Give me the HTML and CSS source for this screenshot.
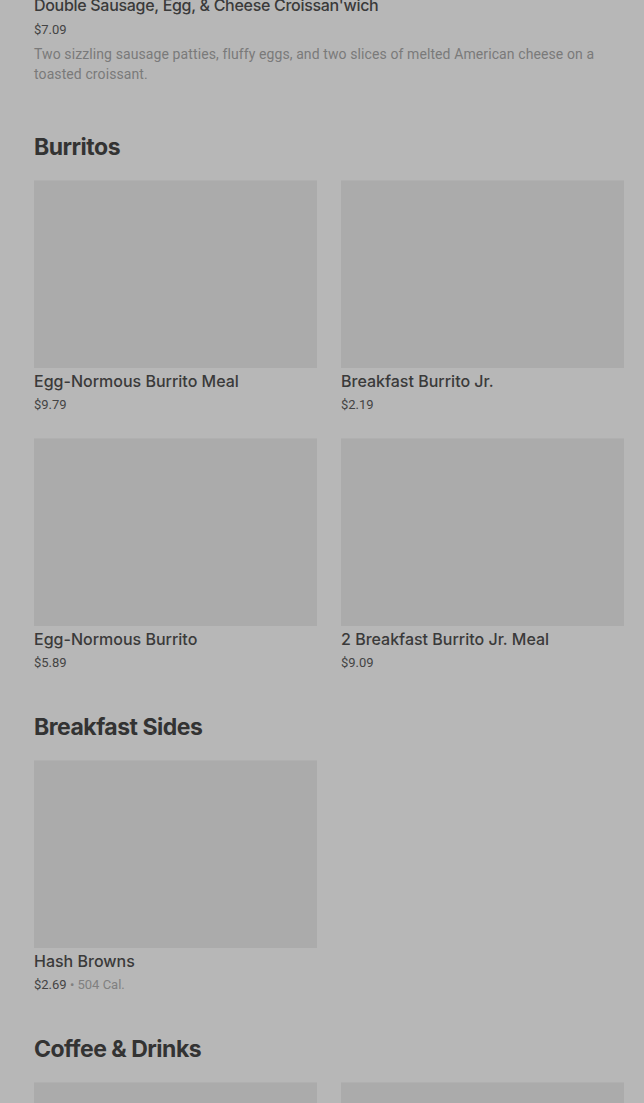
FILE: index.html
```html
<!DOCTYPE html>
<html>
<head>
<meta charset="utf-8">
<link rel="stylesheet" href="styles.css">
</head>
<body>
<main class="menu">
  <div class="list-item">
    <div class="item-name">Double Sausage, Egg, &amp; Cheese Croissan'wich</div>
    <div class="item-price">$7.09</div>
    <div class="item-desc">Two sizzling sausage patties, fluffy eggs, and two slices of melted American cheese on a toasted croissant.</div>
  </div>

  <section class="section">
    <h2 class="section-title">Burritos</h2>
    <div class="grid">
      <div class="card">
        <div class="card-img"></div>
        <div class="item-name">Egg-Normous Burrito Meal</div>
        <div class="item-price">$9.79</div>
      </div>
      <div class="card">
        <div class="card-img"></div>
        <div class="item-name">Breakfast Burrito Jr.</div>
        <div class="item-price">$2.19</div>
      </div>
      <div class="card">
        <div class="card-img"></div>
        <div class="item-name">Egg-Normous Burrito</div>
        <div class="item-price">$5.89</div>
      </div>
      <div class="card">
        <div class="card-img"></div>
        <div class="item-name">2 Breakfast Burrito Jr. Meal</div>
        <div class="item-price">$9.09</div>
      </div>
    </div>
  </section>

  <section class="section">
    <h2 class="section-title">Breakfast Sides</h2>
    <div class="grid">
      <div class="card">
        <div class="card-img"></div>
        <div class="item-name">Hash Browns</div>
        <div class="item-price">$2.69 <span class="cal">• 504 Cal.</span></div>
      </div>
    </div>
  </section>

  <section class="section">
    <h2 class="section-title">Coffee &amp; Drinks</h2>
    <div class="grid">
      <div class="card">
        <div class="card-img"></div>
      </div>
      <div class="card">
        <div class="card-img"></div>
      </div>
    </div>
  </section>
</main>
</body>
</html>
```
FILE: styles.css
```css
html, body {
  margin: 0;
  padding: 0;
  background: #b7b7b7;
  overflow: hidden;
}

body {
  font-family: Roboto, "Liberation Sans", sans-serif;
  color: #383838;
}

.menu {
  padding: 0 20px 0 34px;
  margin-top: -7px;
}

.list-item {
  padding-bottom: 7px;
}

.item-name {
  font-family: Inter, "Liberation Sans", sans-serif;
  font-size: 16px;
  line-height: 24px;
  font-weight: 500;
  color: #3a3a3a;
}

.list-item .item-name {
  letter-spacing: -0.3px;
}

.card .item-name {
  padding-top: 1px;
}

.item-price {
  font-size: 13px;
  line-height: 19px;
  color: #444444;
}

.card .item-price {
  margin-top: 2px;
}

.list-item .item-price {
  margin-top: 3px;
  line-height: 20px;
}

.item-desc {
  margin-top: 4px;
  font-size: 14px;
  line-height: 20px;
  letter-spacing: 0.1px;
  color: #7a7a7a;
}

.cal {
  color: #808080;
}

.section {
  padding-top: 39px;
}

.list-item + .section {
  padding-top: 40px;
}

.section-title {
  margin: 0 0 17px 0;
  font-family: Inter, "Liberation Sans", sans-serif;
  font-size: 23px;
  line-height: 32px;
  font-weight: 700;
  letter-spacing: -0.5px;
  color: #333333;
}

.grid {
  display: grid;
  grid-template-columns: 283px 283px;
  column-gap: 24px;
  row-gap: 24px;
}

.card-img {
  height: 187px;
  background: #ababab;
  border-top: 1px solid #b0b0b0;
}
```
